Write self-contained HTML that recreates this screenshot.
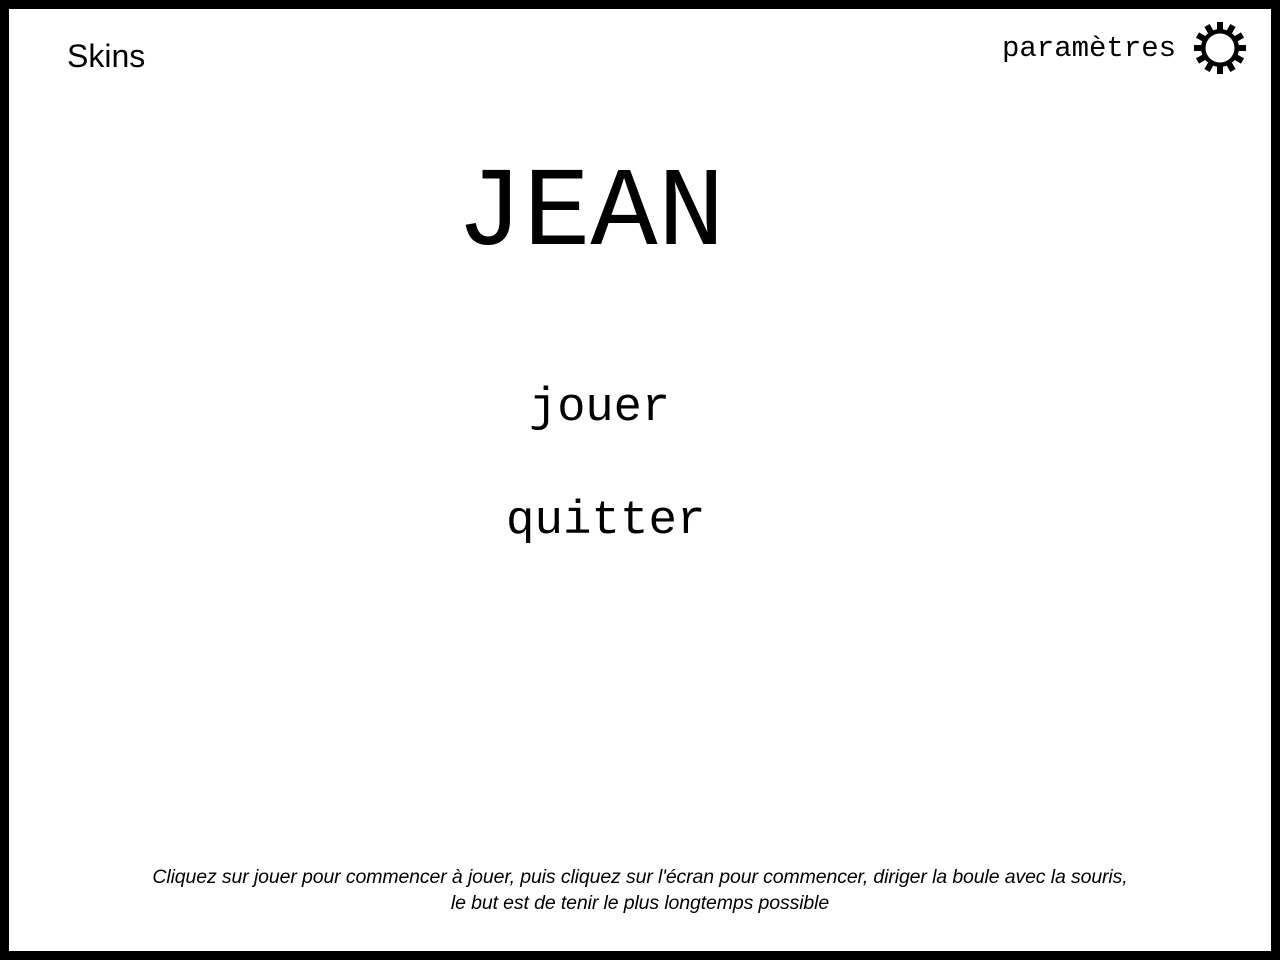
<!DOCTYPE html>
<html><head><meta charset="utf-8"><style>
html,body{margin:0;padding:0}
body{width:1280px;height:960px;background:#000;position:relative;overflow:hidden}
.in{position:absolute;left:9px;top:9px;width:1262px;height:942px;background:#fff}
.t{position:absolute;white-space:nowrap;color:#000}
.mono{font-family:"Liberation Mono",monospace}
</style></head><body>
<div class="in"></div>
<div class="t" style="left:67px;top:38px;font-family:'Liberation Sans',sans-serif;font-size:32px">Skins</div>
<div class="t mono" style="left:1002px;top:32px;font-size:29px">paramètres</div>
<svg style="position:absolute;left:1190px;top:20px" width="60" height="56" viewBox="-30 -28 60 56">
<g fill="#000">
<circle r="19"/>
<g id="th"><rect x="-3" y="-26" width="6" height="10"/></g>
<use href="#th" transform="rotate(30)"/><use href="#th" transform="rotate(60)"/><use href="#th" transform="rotate(90)"/>
<use href="#th" transform="rotate(120)"/><use href="#th" transform="rotate(150)"/><use href="#th" transform="rotate(180)"/>
<use href="#th" transform="rotate(210)"/><use href="#th" transform="rotate(240)"/><use href="#th" transform="rotate(270)"/>
<use href="#th" transform="rotate(300)"/><use href="#th" transform="rotate(330)"/>
</g>
<circle r="14.5" fill="#fff"/>
</svg>
<div class="t mono" style="left:456px;top:155px;font-size:112px;line-height:120px">JEAN</div>
<div class="t mono" style="left:529px;top:381px;font-size:47px;line-height:56px">jouer</div>
<div class="t mono" style="left:506px;top:493px;font-size:47.5px;line-height:56px">quitter</div>
<div class="t" style="left:0;width:1280px;top:864px;text-align:center;font-family:'Liberation Sans',sans-serif;font-style:italic;font-size:19.5px;line-height:26px;letter-spacing:-0.12px">Cliquez sur jouer pour commencer à jouer, puis cliquez sur l'écran pour commencer, diriger la boule avec la souris,<br>le but est de tenir le plus longtemps possible</div>
</body></html>
